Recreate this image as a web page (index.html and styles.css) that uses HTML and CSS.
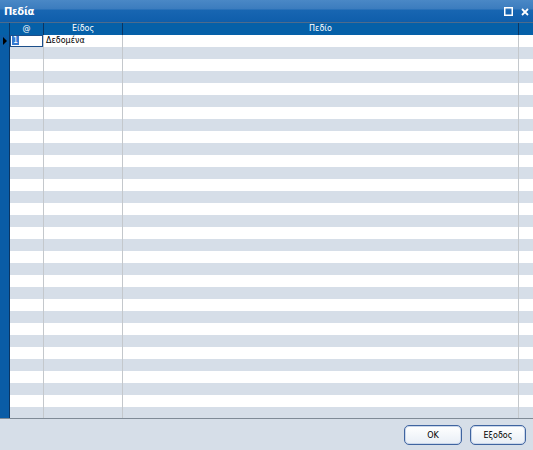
FILE: index.html
```html
<!DOCTYPE html>
<html>
<head>
<meta charset="utf-8">
<link rel="stylesheet" href="styles.css">
</head>
<body>
<div class="window">
  <div class="titlebar">
    <span class="title">Πεδία</span>
    <div class="controls">
      <svg class="ctl" width="9" height="9" viewBox="0 0 9 9"><rect x="0.75" y="0.75" width="7.5" height="7.5" fill="none" stroke="#fff" stroke-width="1.5"/></svg>
      <svg class="ctl" width="8" height="8" viewBox="0 0 8 8"><path d="M1 1L7 7M7 1L1 7" stroke="#fff" stroke-width="1.8"/></svg>
    </div>
  </div>
  <div class="table">
    <div class="col col-ind">
      <div class="hcell"></div>
      <div class="body"><div class="cell ind"><span class="arrow"></span></div></div>
    </div>
    <div class="col col-at">
      <div class="hcell">@</div>
      <div class="body"><div class="cell focus"><span class="sel">1</span></div></div>
    </div>
    <div class="col col-kind">
      <div class="hcell">Είδος</div>
      <div class="body"><div class="cell">Δεδομένα</div></div>
    </div>
    <div class="col col-field">
      <div class="hcell">Πεδίο</div>
      <div class="body"></div>
    </div>
    <div class="col col-fill">
      <div class="hcell"></div>
      <div class="body"></div>
    </div>
  </div>
  <div class="footer">
    <button class="btn btn-ok">OK</button>
    <button class="btn btn-exit">Εξοδος</button>
  </div>
</div>
</body>
</html>
```
FILE: styles.css
```css
html, body {
  margin: 0;
  padding: 0;
  width: 533px;
  height: 450px;
  overflow: hidden;
  font-family: "DejaVu Sans", "Liberation Sans", sans-serif;
}
.window {
  width: 533px;
  height: 450px;
  display: flex;
  flex-direction: column;
  background: #d6dee8;
}
.titlebar {
  height: 22px;
  border-bottom: 1px solid #4d6b8c;
  background: linear-gradient(to bottom, #4a88c6 0px, #3b7cbe 9px, #1866b2 10px, #0f5eab 22px);
  display: flex;
  align-items: center;
  justify-content: space-between;
  padding: 0 4px 0 4px;
  flex: none;
}
.title {
  color: #fff;
  font-family: "DejaVu Sans", sans-serif;
  font-weight: bold;
  font-size: 10px;
  letter-spacing: -0.3px;
  margin-top: 1px;
}
.controls {
  display: flex;
  align-items: center;
  gap: 8px;
  margin-top: 1px;
}
.ctl { display: block; }
.table {
  height: 395px;
  display: flex;
  flex: none;
  border-bottom: 1px solid #7f8a96;
  background: repeating-linear-gradient(to bottom, #ffffff 0 12px, #d6dee8 12px 24px);
  background-position: 0 12px;
}
.col {
  display: flex;
  flex-direction: column;
  flex: none;
}
.hcell {
  height: 12px;
  background: #0560a8;
  color: #fff;
  font-size: 8px;
  line-height: 12px;
  text-align: center;
  border-right: 1px solid #0a3563;
  flex: none;
}
.body {
  flex: 1;
  border-right: 1px solid #c4c8cc;
}
.col-ind { width: 10px; }
.col-ind .body { background: #0a5ca6; border-right: 1px solid #0a3563; }
.col-at { width: 34px; }
.col-kind { width: 79px; }
.col-field { width: 396px; }
.col-fill { flex: 1; }
.col-fill .hcell, .col-fill .body { border-right: none; }
.cell {
  height: 12px;
  font-size: 8px;
  line-height: 12px;
  color: #000;
  padding-left: 2px;
  box-sizing: border-box;
  white-space: nowrap;
}
.ind {
  display: flex;
  align-items: center;
  padding-left: 3px;
}
.arrow {
  width: 0;
  height: 0;
  border-top: 4px solid transparent;
  border-bottom: 4px solid transparent;
  border-left: 4px solid #000;
}
.focus {
  border: 1px solid #1c4f8a;
  padding-left: 1px;
  line-height: 10px;
}
.sel {
  background: #3478d0;
  color: #fff;
  padding: 0 1px;
}
.footer {
  flex: 1;
  display: flex;
  justify-content: flex-end;
  align-items: flex-start;
  gap: 8px;
  padding: 6px 7px 0 0;
}
.btn {
  height: 20px;
  border: 1px solid #3f64a0;
  border-radius: 5px;
  background: linear-gradient(to bottom, #ffffff, #e8eef6);
  box-shadow: inset 0 0 0 1px #c9d6ea;
  font-family: "DejaVu Sans", sans-serif;
  font-size: 8px;
  color: #000;
  padding: 0;
  cursor: default;
}
.btn-ok { width: 58px; }
.btn-exit { width: 56px; }
```
